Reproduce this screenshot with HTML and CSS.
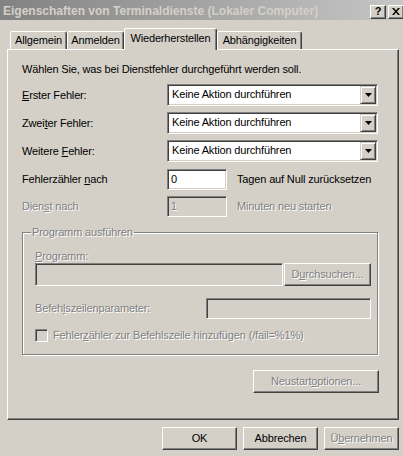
FILE: index.html
```html
<!DOCTYPE html>
<html lang="de">
<head>
<meta charset="utf-8">
<title>Eigenschaften von Terminaldienste</title>
<link rel="stylesheet" href="styles.css">
</head>
<body>
<div class="titlebar">
  <span class="title">Eigenschaften von Terminaldienste (Lokaler Computer)</span>
  <div class="tbtns">
    <span class="tbtn help">?</span>
    <span class="tbtn close"><svg width="8" height="7" viewBox="0 0 8 7"><path d="M0 0h2l2 2.5L6 0h2L5 3.5 8 7H6L4 4.5 2 7H0l3-3.5z" fill="#000"/></svg></span>
  </div>
</div>
<div class="dialog">
  <div class="tabs">
    <div class="tab t1">Allgemein</div>
    <div class="tab t2">Anmelden</div>
    <div class="tab t3 active">Wiederherstellen</div>
    <div class="tab t4">Abhängigkeiten</div>
  </div>
  <div class="panel">
    <div class="intro">Wählen Sie, was bei Dienstfehler durchgeführt werden soll.</div>
    <div class="row r1">
      <span class="lbl"><u>E</u>rster Fehler:</span>
      <div class="combo"><span class="ctext">Keine Aktion durchführen</span><span class="dd"><svg width="7" height="4" viewBox="0 0 7 4"><path d="M0 0h7L3.5 4z" fill="#000"/></svg></span></div>
    </div>
    <div class="row r2">
      <span class="lbl">Zwei<u>t</u>er Fehler:</span>
      <div class="combo"><span class="ctext">Keine Aktion durchführen</span><span class="dd"><svg width="7" height="4" viewBox="0 0 7 4"><path d="M0 0h7L3.5 4z" fill="#000"/></svg></span></div>
    </div>
    <div class="row r3">
      <span class="lbl">Weitere <u>F</u>ehler:</span>
      <div class="combo"><span class="ctext">Keine Aktion durchführen</span><span class="dd"><svg width="7" height="4" viewBox="0 0 7 4"><path d="M0 0h7L3.5 4z" fill="#000"/></svg></span></div>
    </div>
    <div class="row r4">
      <span class="lbl">Fehlerzähler <u>n</u>ach</span>
      <div class="field small">0</div>
      <span class="after">Tagen auf Null zurücksetzen</span>
    </div>
    <div class="row r5 disabled">
      <span class="lbl">Dien<u>s</u>t nach</span>
      <div class="field small off">1</div>
      <span class="after">Minuten neu starten</span>
    </div>
    <div class="group disabled">
      <span class="legend">Programm ausführen</span>
      <div class="glabel"><u>P</u>rogramm:</div>
      <div class="prow">
        <div class="field off prog"></div>
        <div class="btn browse"><span>D<u>u</u>rchsuchen...</span></div>
      </div>
      <div class="parrow">
        <span class="plbl">Befeh<u>l</u>szeilenparameter:</span>
        <div class="field off params"></div>
      </div>
      <div class="chkrow">
        <span class="chk"></span>
        <span>Fehler<u>z</u>ähler zur Befehlszeile hinzufügen (/fail=%1%)</span>
      </div>
    </div>
    <div class="restart-row">
      <div class="btn restart disabled"><span>Neustart<u>o</u>ptionen...</span></div>
    </div>
  </div>
  <div class="footer">
    <div class="btn">OK</div>
    <div class="btn">Abbrechen</div>
    <div class="btn disabled"><span>Ü<u>b</u>ernehmen</span></div>
  </div>
</div>
</body>
</html>
```
FILE: styles.css
```css
* { box-sizing: border-box; }
html, body { margin: 0; padding: 0; }
body {
  width: 403px;
  height: 456px;
  overflow: hidden;
  background: #d4d0c8;
  font-family: "Liberation Sans", Arial, sans-serif;
  font-size: 11px;
  line-height: 13px;
  letter-spacing: -0.15px;
  color: #000;
}
u { text-decoration: underline; text-underline-offset: 1px; }

.titlebar {
  height: 20px;
  display: flex;
  align-items: center;
  padding: 3px 0 0 3px;
  background: linear-gradient(to right, #828282, #c6c6c6);
}
.title {
  flex: 1;
  color: #d4d0c8;
  font-weight: bold;
  font-size: 12px;
  letter-spacing: 0;
  white-space: nowrap;
}
.tbtns { display: flex; gap: 2px; margin-right: -1px; }
.tbtn {
  width: 16px;
  height: 14px;
  background: #d4d0c8;
  border: 1px solid;
  border-color: #fff #404040 #404040 #fff;
  box-shadow: inset -1px -1px 0 #808080;
  display: flex;
  align-items: center;
  justify-content: center;
  font-weight: bold;
  font-size: 11px;
  letter-spacing: 0;
}

.dialog { padding: 8px 4px 0 7px; }

.tabs {
  display: flex;
  align-items: flex-end;
  height: 21px;
  padding-left: 3px;
  position: relative;
  z-index: 2;
}
.tab {
  height: 18px;
  border: 1px solid;
  border-bottom: none;
  border-color: #fff #404040 transparent #fff;
  box-shadow: inset -1px 0 0 #808080;
  border-radius: 2px 3px 0 0;
  background: #d4d0c8;
  display: flex;
  align-items: center;
  justify-content: center;
  white-space: nowrap;
  padding-bottom: 1px;
}
.t1 { width: 57px; }
.t2 { width: 57px; }
.t3 { width: 93px; }
.t4 { width: 85px; }
.tab.active {
  height: 22px;
  margin-bottom: -1px;
  padding-bottom: 3px;
}

.panel {
  width: 392px;
  height: 371px;
  border: 1px solid;
  border-color: #fff #404040 #404040 #fff;
  box-shadow: inset -1px -1px 0 #808080;
  padding: 13px 0 0 14px;
}

.intro { height: 13px; white-space: nowrap; }

.row {
  display: flex;
  align-items: center;
  height: 22px;
}
.r1 { margin-top: 8px; }
.r2, .r3 { margin-top: 6px; }
.r4 { margin-top: 7px; height: 21px; }
.r5 { margin-top: 6px; height: 21px; }
.lbl { width: 145px; white-space: nowrap; }

.combo {
  width: 211px;
  height: 22px;
  background: #fff;
  border: 1px solid;
  border-color: #808080 #fff #fff #808080;
  box-shadow: inset 1px 1px 0 #404040, inset -1px -1px 0 #d4d0c8;
  display: flex;
  align-items: center;
  padding: 1px 2px 2px 4px;
}
.ctext { flex: 1; white-space: nowrap; }
.dd {
  width: 16px;
  height: 18px;
  margin-right: -1px;
  background: #d4d0c8;
  border: 1px solid;
  border-color: #d4d0c8 #404040 #404040 #d4d0c8;
  box-shadow: inset 1px 1px 0 #fff, inset -1px -1px 0 #808080;
  display: flex;
  align-items: center;
  justify-content: center;
}
.dd svg { display: block; }

.field {
  background: #fff;
  border: 1px solid;
  border-color: #808080 #fff #fff #808080;
  box-shadow: inset 1px 1px 0 #404040, inset -1px -1px 0 #d4d0c8;
  padding: 0 3px;
  display: flex;
  align-items: center;
}
.field.off { background: #d4d0c8; }
.field.small { width: 60px; height: 21px; }
.after { margin-left: 10px; white-space: nowrap; }

.disabled, .disabled .field {
  color: #808080;
  text-shadow: 1px 1px 0 #fff;
}

.group {
  margin-top: 15px;
  width: 356px;
  height: 123px;
  border: 1px solid #808080;
  box-shadow: 1px 1px 0 #fff, inset 1px 1px 0 #fff;
}
.legend {
  display: block;
  width: fit-content;
  margin: -7px 0 0 8px;
  padding: 0 1px;
  background: #d4d0c8;
  white-space: nowrap;
}
.glabel { margin: 11px 0 0 12px; height: 13px; }
.prow { display: flex; margin-left: 12px; height: 23px; }
.prog { width: 248px; height: 23px; }
.browse { width: 87px; height: 23px; margin-left: 1px; }
.parrow { display: flex; align-items: center; margin: 12px 0 0 12px; height: 21px; }
.plbl { width: 171px; white-space: nowrap; }
.params { width: 165px; height: 21px; }
.chkrow { display: flex; align-items: center; margin: 10px 0 0 12px; height: 13px; white-space: nowrap; }
.chk {
  width: 13px;
  height: 13px;
  margin-right: 5px;
  background: #d4d0c8;
  border: 1px solid;
  border-color: #808080 #fff #fff #808080;
  box-shadow: inset 1px 1px 0 #404040, inset -1px -1px 0 #d4d0c8;
}

.btn {
  height: 23px;
  background: #d4d0c8;
  border: 1px solid;
  border-color: #fff #404040 #404040 #fff;
  box-shadow: inset -1px -1px 0 #808080;
  display: flex;
  align-items: center;
  justify-content: center;
  white-space: nowrap;
}
.btn.disabled, .group .btn {
  color: #808080;
  text-shadow: 1px 1px 0 #fff;
}

.restart-row {
  width: 357px;
  margin-top: 15px;
  display: flex;
  justify-content: flex-end;
}
.restart { width: 126px; }

.footer {
  margin-top: 7px;
  display: flex;
  justify-content: flex-end;
  gap: 6px;
}
.footer .btn { width: 75px; }
```
